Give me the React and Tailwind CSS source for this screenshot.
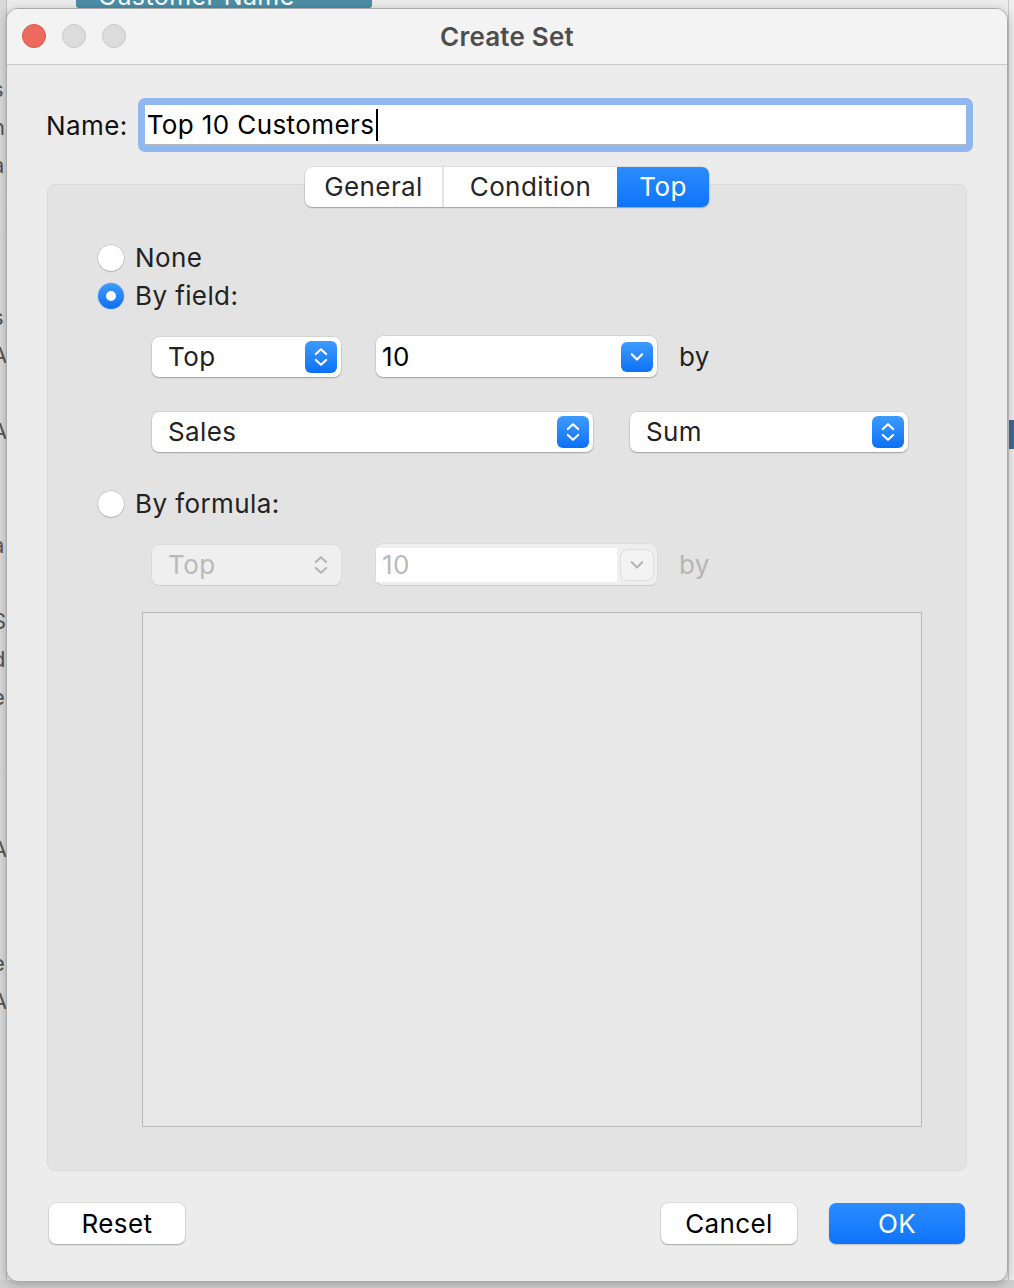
import React from 'react'

const font = "font-['Inter','Liberation_Sans',sans-serif] tracking-[0.4px]"

function Updown({ disabled }) {
  return (
    <svg viewBox="0 0 16 16" className="w-[26px] h-[26px]" aria-hidden>
      <path d="M4.8 6.2 L8 3.2 L11.2 6.2" fill="none" stroke={disabled ? '#b4b4b4' : '#fff'} strokeWidth="1.3" strokeLinecap="round" strokeLinejoin="round" />
      <path d="M4.8 9.8 L8 12.8 L11.2 9.8" fill="none" stroke={disabled ? '#b4b4b4' : '#fff'} strokeWidth="1.3" strokeLinecap="round" strokeLinejoin="round" />
    </svg>
  )
}

function Down({ disabled }) {
  return (
    <svg viewBox="0 0 16 16" className="w-[22px] h-[22px]" aria-hidden>
      <path d="M4.2 6 L8 9.8 L11.8 6" fill="none" stroke={disabled ? '#b4b4b4' : '#fff'} strokeWidth="1.6" strokeLinecap="round" strokeLinejoin="round" />
    </svg>
  )
}

function Select({ label, width, disabled }) {
  return (
    <div
      className={`flex items-center justify-between h-[40px] rounded-[7px] pl-[16px] pr-[4px] ${width} ${disabled ? 'bg-[#efefef] text-[#b9b9b9] shadow-[0_0_0_0.5px_rgba(0,0,0,0.06),0_1px_1px_rgba(0,0,0,0.08)]' : 'bg-white text-[#222] shadow-[0_0_0_0.5px_rgba(0,0,0,0.12),0_1px_1.5px_rgba(0,0,0,0.25)]'}`}
    >
      <span className="text-[26px] leading-none">{label}</span>
      <div className={`w-[32px] h-[32px] rounded-[6px] flex items-center justify-center ${disabled ? '' : 'bg-gradient-to-b from-[#3d9bff] to-[#0a70f7]'}`}>
        <Updown disabled={disabled} />
      </div>
    </div>
  )
}

function Combo({ value, disabled }) {
  return (
    <div
      className={`flex items-center justify-between w-[281px] h-[41px] rounded-[7px] pr-[4px] ${disabled ? 'bg-[#efefef] shadow-[0_0_0_0.5px_rgba(0,0,0,0.06),0_1px_1px_rgba(0,0,0,0.08)]' : 'bg-white shadow-[0_0_0_0.5px_rgba(0,0,0,0.12),0_1px_1.5px_rgba(0,0,0,0.25)]'}`}
    >
      <div className={`flex-1 h-[34px] flex items-center pl-[6px] ${disabled ? 'bg-white mr-[4px] text-[#b9b9b9]' : 'text-black'}`}>
        <span className="text-[26px] leading-none">{value}</span>
      </div>
      <div className={`w-[32px] h-[30px] rounded-[6px] flex items-center justify-center ${disabled ? 'bg-[#f3f3f3] shadow-[0_0_0_0.5px_rgba(0,0,0,0.15)]' : 'bg-gradient-to-b from-[#3d9bff] to-[#0a70f7]'}`}>
        <Down disabled={disabled} />
      </div>
    </div>
  )
}

function Radio({ checked, label }) {
  return (
    <div className="flex items-center h-[38px]">
      {checked ? (
        <div className="w-[26px] h-[26px] rounded-full bg-gradient-to-b from-[#3d9bff] to-[#0a70f7] flex items-center justify-center shadow-[0_0_0_0.5px_rgba(0,0,0,0.12)]">
          <div className="w-[10px] h-[10px] rounded-full bg-white" />
        </div>
      ) : (
        <div className="w-[26px] h-[26px] rounded-full bg-white shadow-[0_0_0_0.5px_rgba(0,0,0,0.2),0_1px_1px_rgba(0,0,0,0.15)]" />
      )}
      <span className="ml-[11px] text-[26px] leading-none text-[#222]">{label}</span>
    </div>
  )
}

export default function App() {
  return (
    <div className={`relative w-[1014px] h-[1288px] overflow-hidden bg-[#d4d4d4] ${font}`}>
      {/* background app behind the sheet */}
      <div className="absolute inset-0 bg-[#ececec]" />
      <div className="absolute left-0 top-0 w-[7px] h-full bg-[#d9d9d9] border-r border-[#bdbdbd] overflow-hidden text-[22px] text-[#555] leading-[38px]">
        <div className="pt-[70px] -ml-[8px] flex flex-col">
          {['s', 'n', 'a', 'r', 'r', '', 's', 'A', '', 'A', '', '', 'a', '', 'S', 'd', 'e', 'i', 'r', '', 'A', '', 'l', 'e', 'A'].map((c, i) => (
            <span key={i} className="h-[38px]">{c || '\u00a0'}</span>
          ))}
        </div>
      </div>
      <div className="absolute right-0 top-0 w-[6px] h-full bg-[#ececec] border-l border-[#c9c9c9]">
        <div className="mt-[420px] h-[29px] bg-[#3f6892]" />
      </div>
      <div className="absolute left-0 bottom-0 w-full h-[8px] bg-[#cfcfcf]" />
      <div className="absolute left-[76px] -top-[16px] w-[296px] h-[24px] rounded-[3px] bg-[#4a8ea6] text-white text-[25px] leading-[24px] pl-[22px]">Customer Name</div>

      {/* Create Set sheet */}
      <div className="absolute left-[6px] top-[8px] w-[1002px] h-[1274px] rounded-[12px] bg-[#ececec] border border-[#a9a9a9] shadow-[0_2px_10px_rgba(0,0,0,0.25)] overflow-hidden flex flex-col">
        <div className="relative h-[56px] bg-[#f3f3f3] border-b border-[#c8c8c8] flex items-center justify-center shrink-0">
          <div className="absolute left-[15px] top-[15px] flex gap-[16px]">
            <div className="w-[24px] h-[24px] rounded-full bg-[#ee6a5f] border border-[#d8574c]" />
            <div className="w-[24px] h-[24px] rounded-full bg-[#dcdcdc] border border-[#c8c8c8]" />
            <div className="w-[24px] h-[24px] rounded-full bg-[#dcdcdc] border border-[#c8c8c8]" />
          </div>
          <span className="text-[26px] font-semibold text-[#4d4d4d] tracking-[0.2px]">Create Set</span>
        </div>

        <div className="flex-1 flex flex-col px-[40px]">
          {/* name */}
          <div className="flex items-center mt-[33px] h-[54px] -mr-[6px]">
            <span className="-ml-[1px] text-[26px] text-[#111]">Name:</span>
            <div className="ml-[10px] flex-1 h-[54px] rounded-[7px] bg-[#90b7ef] p-[7px]">
              <div className="h-full bg-white border-b border-[#b8b8b8] flex items-center pl-[2px]">
                <span className="text-[26px] leading-none text-black">Top 10 Customers</span>
                <span className="w-[2px] h-[32px] bg-black ml-[2px]" />
              </div>
            </div>
          </div>

          {/* tabs + group */}
          <div className="mt-[15px] flex flex-col items-center">
            <div className="relative z-10 flex h-[40px] rounded-[7px] bg-white shadow-[0_0_0_0.5px_rgba(0,0,0,0.12),0_1px_1.5px_rgba(0,0,0,0.25)] overflow-hidden text-[26px] leading-none">
              <div className="w-[139px] flex items-center justify-center text-[#262626] border-r-2 border-[#e2e2e2]">General</div>
              <div className="w-[173px] flex items-center justify-center text-[#262626]">Condition</div>
              <div className="w-[92px] flex items-center justify-center text-white bg-gradient-to-b from-[#2a8cff] to-[#0d74f9]">Top</div>
            </div>

            <div className="-mt-[23px] w-full h-[987px] rounded-[8px] bg-[#e3e3e3] border border-[#dadada] pt-[54px] pl-[50px] flex flex-col">
              <Radio label="None" />
              <Radio checked label="By field:" />

              <div className="mt-[21px] ml-[54px] flex items-center">
                <Select label="Top" width="w-[189px]" />
                <div className="ml-[35px]"><Combo value="10" /></div>
                <span className="ml-[22px] text-[26px] text-[#222]">by</span>
              </div>
              <div className="mt-[35px] ml-[54px] flex items-center">
                <Select label="Sales" width="w-[441px]" />
                <div className="ml-[37px]"><Select label="Sum" width="w-[278px]" /></div>
              </div>

              <div className="mt-[33px]">
                <Radio label="By formula:" />
              </div>
              <div className="mt-[21px] ml-[54px] flex items-center">
                <Select label="Top" width="w-[189px]" disabled />
                <div className="ml-[35px]"><Combo value="10" disabled /></div>
                <span className="ml-[22px] text-[26px] text-[#b5b5b5]">by</span>
              </div>

              <div className="mt-[27px] ml-[44px] w-[780px] h-[515px] bg-[#e8e8e8] border border-[#b7b7b7]" />
            </div>
          </div>

          {/* footer */}
          <div className="mt-[32px] flex items-center">
            <button className="ml-[2px] w-[136px] h-[41px] rounded-[7px] bg-white shadow-[0_0_0_0.5px_rgba(0,0,0,0.12),0_1px_1.5px_rgba(0,0,0,0.25)] text-[26px] text-black">Reset</button>
            <div className="flex-1" />
            <button className="w-[136px] h-[41px] rounded-[7px] bg-white shadow-[0_0_0_0.5px_rgba(0,0,0,0.12),0_1px_1.5px_rgba(0,0,0,0.25)] text-[26px] text-black">Cancel</button>
            <button className="ml-[32px] mr-[2px] w-[136px] h-[41px] rounded-[7px] bg-gradient-to-b from-[#2a8cff] to-[#0d74f9] shadow-[0_1px_1.5px_rgba(0,0,0,0.2)] text-[26px] text-white">OK</button>
          </div>
        </div>
      </div>
    </div>
  )
}
